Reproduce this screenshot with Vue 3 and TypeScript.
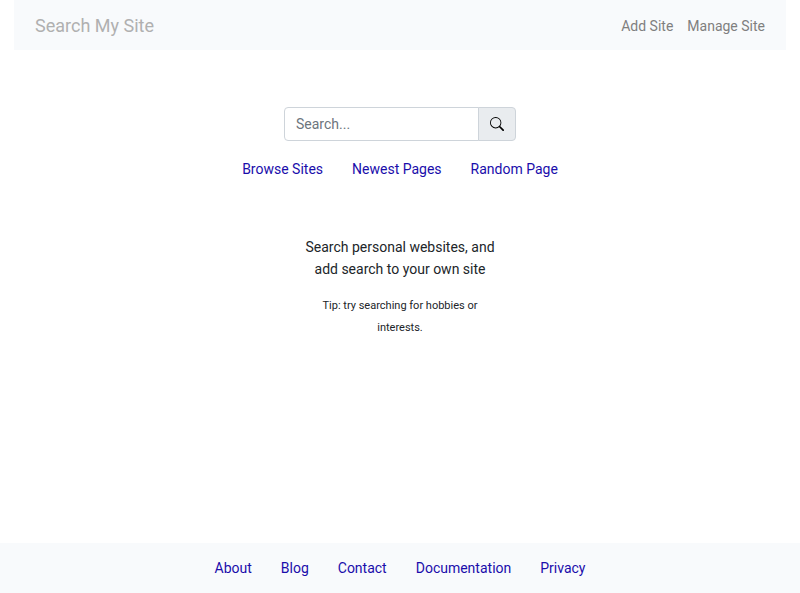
<script setup lang="ts">
import { ref } from 'vue'

interface NavLink {
  label: string
  href: string
}

const query = ref('')

const navLinks: NavLink[] = [
  { label: 'Add Site', href: '#add' },
  { label: 'Manage Site', href: '#manage' },
]

const browseLinks: NavLink[] = [
  { label: 'Browse Sites', href: '#browse' },
  { label: 'Newest Pages', href: '#newest' },
  { label: 'Random Page', href: '#random' },
]

const footerLinks: NavLink[] = [
  { label: 'About', href: '#about' },
  { label: 'Blog', href: '#blog' },
  { label: 'Contact', href: '#contact' },
  { label: 'Documentation', href: '#documentation' },
  { label: 'Privacy', href: '#privacy' },
]
</script>

<template>
  <div class="page">
    <header class="navbar">
      <a class="brand" href="#home">Search My Site</a>
      <nav class="nav-links">
        <a v-for="link in navLinks" :key="link.href" :href="link.href">{{ link.label }}</a>
      </nav>
    </header>

    <main class="content">
      <form class="search" role="search" @submit.prevent>
        <input v-model="query" type="search" placeholder="Search..." aria-label="Search" />
        <button type="submit" aria-label="Submit search">
          <svg viewBox="0 0 16 16" fill="currentColor" aria-hidden="true">
            <path
              d="M10.442 10.442a1 1 0 0 1 1.415 0l3.85 3.85a1 1 0 0 1-1.414 1.415l-3.85-3.85a1 1 0 0 1 0-1.415z"
            />
            <path
              d="M6.5 12a5.5 5.5 0 1 0 0-11 5.5 5.5 0 0 0 0 11zM13 6.5a6.5 6.5 0 1 1-13 0 6.5 6.5 0 0 1 13 0z"
            />
          </svg>
        </button>
      </form>

      <nav class="links">
        <a v-for="link in browseLinks" :key="link.href" :href="link.href">{{ link.label }}</a>
      </nav>

      <section class="intro">
        <p>Search personal websites, and add search to your own site</p>
        <p class="tip">Tip: try searching for hobbies or interests.</p>
      </section>
    </main>

    <footer class="footer">
      <nav class="links">
        <a v-for="link in footerLinks" :key="link.href" :href="link.href">{{ link.label }}</a>
      </nav>
    </footer>
  </div>
</template>

<style>
body {
  margin: 0;
  background: #fff;
}
</style>

<style scoped>
.page {
  display: flex;
  flex-direction: column;
  min-height: 100vh;
  color: #212529;
  font-family: Roboto, sans-serif;
  font-size: 14px;
  line-height: 22px;
}

a {
  text-decoration: none;
}

.navbar {
  display: flex;
  align-items: center;
  justify-content: space-between;
  margin: 0 14px;
  padding: 12px 21px 10px;
  background: #f8fafc;
}

.brand {
  color: #b0b0b0;
  font-size: 18px;
  line-height: 28px;
}

.nav-links {
  display: flex;
  gap: 14px;
}

.nav-links a {
  color: #7f7f7f;
}

.content {
  display: flex;
  flex: 1;
  flex-direction: column;
  align-items: center;
  padding-top: 57px;
}

.search {
  display: flex;
  width: 232px;
}

.search input {
  box-sizing: border-box;
  flex: 1;
  min-width: 0;
  height: 34px;
  padding: 5px 11px;
  border: 1px solid #ced4da;
  border-radius: 4px 0 0 4px;
  background: #fff;
  color: #495057;
  font: inherit;
  appearance: none;
}

.search input::placeholder {
  color: #6c757d;
  opacity: 1;
}

.search button {
  display: flex;
  align-items: center;
  justify-content: center;
  box-sizing: border-box;
  width: 38px;
  height: 34px;
  margin-left: -1px;
  padding: 0;
  border: 1px solid #ced4da;
  border-radius: 0 4px 4px 0;
  background: #e9ecef;
  color: #000;
}

.search svg {
  width: 14px;
  height: 14px;
}

.links {
  display: flex;
  justify-content: center;
  gap: 29px;
}

.links a {
  color: #1a0dab;
}

.content .links {
  margin-top: 17px;
}

.intro {
  width: 200px;
  margin-top: 56px;
  text-align: center;
}

.intro p {
  margin: 0 0 15px;
}

.intro .tip {
  font-size: 11px;
}

.footer {
  padding: 14px 0;
  background: #f8fafc;
}
</style>
